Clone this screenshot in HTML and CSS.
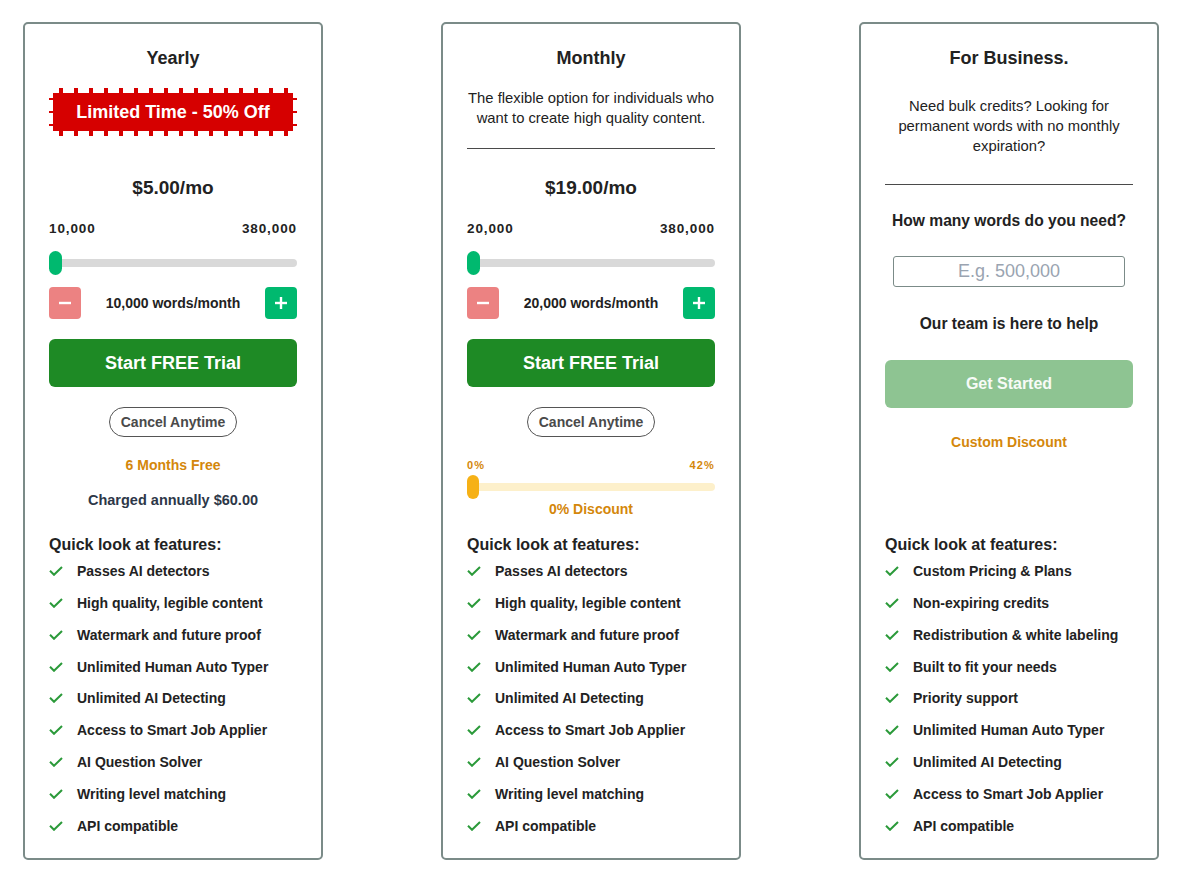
FILE: index.html
```html
<!DOCTYPE html>
<html lang="en">
<head>
<meta charset="utf-8">
<title>Pricing</title>
<link rel="stylesheet" href="styles.css">
</head>
<body>
<div class="page">

  <section class="card">
    <h2 class="title">Yearly</h2>
    <div class="badge"><div class="badge-body">Limited Time - 50% Off</div></div>
    <div class="price">$5.00/mo</div>
    <div class="range-labels"><span>10,000</span><span>380,000</span></div>
    <div class="slider"><div class="track"></div><div class="thumb"></div></div>
    <div class="stepper">
      <button class="step minus"><svg width="14" height="14" viewBox="0 0 14 14"><line x1="1" y1="7" x2="13" y2="7" stroke="#fff" stroke-width="2.4"/></svg></button>
      <span class="words">10,000 words/month</span>
      <button class="step plus"><svg width="14" height="14" viewBox="0 0 14 14"><line x1="1" y1="7" x2="13" y2="7" stroke="#fff" stroke-width="2.4"/><line x1="7" y1="1" x2="7" y2="13" stroke="#fff" stroke-width="2.4"/></svg></button>
    </div>
    <button class="cta">Start FREE Trial</button>
    <div class="pill-wrap"><span class="pill">Cancel Anytime</span></div>
    <div class="orange months">6 Months Free</div>
    <div class="charged">Charged annually $60.00</div>
    <h3 class="feat-title">Quick look at features:</h3>
    <ul class="features">
      <li><svg class="chk" width="14" height="10" viewBox="0 0 14 10"><polyline points="1,4.8 5,8.8 13,1" fill="none" stroke="#2b9a3a" stroke-width="2"/></svg>Passes AI detectors</li>
      <li><svg class="chk" width="14" height="10" viewBox="0 0 14 10"><polyline points="1,4.8 5,8.8 13,1" fill="none" stroke="#2b9a3a" stroke-width="2"/></svg>High quality, legible content</li>
      <li><svg class="chk" width="14" height="10" viewBox="0 0 14 10"><polyline points="1,4.8 5,8.8 13,1" fill="none" stroke="#2b9a3a" stroke-width="2"/></svg>Watermark and future proof</li>
      <li><svg class="chk" width="14" height="10" viewBox="0 0 14 10"><polyline points="1,4.8 5,8.8 13,1" fill="none" stroke="#2b9a3a" stroke-width="2"/></svg>Unlimited Human Auto Typer</li>
      <li><svg class="chk" width="14" height="10" viewBox="0 0 14 10"><polyline points="1,4.8 5,8.8 13,1" fill="none" stroke="#2b9a3a" stroke-width="2"/></svg>Unlimited AI Detecting</li>
      <li><svg class="chk" width="14" height="10" viewBox="0 0 14 10"><polyline points="1,4.8 5,8.8 13,1" fill="none" stroke="#2b9a3a" stroke-width="2"/></svg>Access to Smart Job Applier</li>
      <li><svg class="chk" width="14" height="10" viewBox="0 0 14 10"><polyline points="1,4.8 5,8.8 13,1" fill="none" stroke="#2b9a3a" stroke-width="2"/></svg>AI Question Solver</li>
      <li><svg class="chk" width="14" height="10" viewBox="0 0 14 10"><polyline points="1,4.8 5,8.8 13,1" fill="none" stroke="#2b9a3a" stroke-width="2"/></svg>Writing level matching</li>
      <li><svg class="chk" width="14" height="10" viewBox="0 0 14 10"><polyline points="1,4.8 5,8.8 13,1" fill="none" stroke="#2b9a3a" stroke-width="2"/></svg>API compatible</li>
    </ul>
  </section>

  <section class="card">
    <h2 class="title">Monthly</h2>
    <p class="desc desc-monthly">The flexible option for individuals who<br>want to create high quality content.</p>
    <hr class="rule rule-monthly">
    <div class="price price-monthly">$19.00/mo</div>
    <div class="range-labels"><span>20,000</span><span>380,000</span></div>
    <div class="slider"><div class="track"></div><div class="thumb"></div></div>
    <div class="stepper">
      <button class="step minus"><svg width="14" height="14" viewBox="0 0 14 14"><line x1="1" y1="7" x2="13" y2="7" stroke="#fff" stroke-width="2.4"/></svg></button>
      <span class="words">20,000 words/month</span>
      <button class="step plus"><svg width="14" height="14" viewBox="0 0 14 14"><line x1="1" y1="7" x2="13" y2="7" stroke="#fff" stroke-width="2.4"/><line x1="7" y1="1" x2="7" y2="13" stroke="#fff" stroke-width="2.4"/></svg></button>
    </div>
    <button class="cta">Start FREE Trial</button>
    <div class="pill-wrap"><span class="pill">Cancel Anytime</span></div>
    <div class="pct-labels"><span>0%</span><span>42%</span></div>
    <div class="slider slider-discount"><div class="track"></div><div class="thumb"></div></div>
    <div class="orange discount">0% Discount</div>
    <h3 class="feat-title feat-title-monthly">Quick look at features:</h3>
    <ul class="features">
      <li><svg class="chk" width="14" height="10" viewBox="0 0 14 10"><polyline points="1,4.8 5,8.8 13,1" fill="none" stroke="#2b9a3a" stroke-width="2"/></svg>Passes AI detectors</li>
      <li><svg class="chk" width="14" height="10" viewBox="0 0 14 10"><polyline points="1,4.8 5,8.8 13,1" fill="none" stroke="#2b9a3a" stroke-width="2"/></svg>High quality, legible content</li>
      <li><svg class="chk" width="14" height="10" viewBox="0 0 14 10"><polyline points="1,4.8 5,8.8 13,1" fill="none" stroke="#2b9a3a" stroke-width="2"/></svg>Watermark and future proof</li>
      <li><svg class="chk" width="14" height="10" viewBox="0 0 14 10"><polyline points="1,4.8 5,8.8 13,1" fill="none" stroke="#2b9a3a" stroke-width="2"/></svg>Unlimited Human Auto Typer</li>
      <li><svg class="chk" width="14" height="10" viewBox="0 0 14 10"><polyline points="1,4.8 5,8.8 13,1" fill="none" stroke="#2b9a3a" stroke-width="2"/></svg>Unlimited AI Detecting</li>
      <li><svg class="chk" width="14" height="10" viewBox="0 0 14 10"><polyline points="1,4.8 5,8.8 13,1" fill="none" stroke="#2b9a3a" stroke-width="2"/></svg>Access to Smart Job Applier</li>
      <li><svg class="chk" width="14" height="10" viewBox="0 0 14 10"><polyline points="1,4.8 5,8.8 13,1" fill="none" stroke="#2b9a3a" stroke-width="2"/></svg>AI Question Solver</li>
      <li><svg class="chk" width="14" height="10" viewBox="0 0 14 10"><polyline points="1,4.8 5,8.8 13,1" fill="none" stroke="#2b9a3a" stroke-width="2"/></svg>Writing level matching</li>
      <li><svg class="chk" width="14" height="10" viewBox="0 0 14 10"><polyline points="1,4.8 5,8.8 13,1" fill="none" stroke="#2b9a3a" stroke-width="2"/></svg>API compatible</li>
    </ul>
  </section>

  <section class="card">
    <h2 class="title">For Business.</h2>
    <p class="desc desc-business">Need bulk credits? Looking for<br>permanent words with no monthly<br>expiration?</p>
    <hr class="rule rule-business">
    <div class="question">How many words do you need?</div>
    <input class="words-input" type="text" placeholder="E.g. 500,000">
    <div class="help">Our team is here to help</div>
    <button class="cta cta-light">Get Started</button>
    <div class="orange custom">Custom Discount</div>
    <h3 class="feat-title feat-title-business">Quick look at features:</h3>
    <ul class="features">
      <li><svg class="chk" width="14" height="10" viewBox="0 0 14 10"><polyline points="1,4.8 5,8.8 13,1" fill="none" stroke="#2b9a3a" stroke-width="2"/></svg>Custom Pricing &amp; Plans</li>
      <li><svg class="chk" width="14" height="10" viewBox="0 0 14 10"><polyline points="1,4.8 5,8.8 13,1" fill="none" stroke="#2b9a3a" stroke-width="2"/></svg>Non-expiring credits</li>
      <li><svg class="chk" width="14" height="10" viewBox="0 0 14 10"><polyline points="1,4.8 5,8.8 13,1" fill="none" stroke="#2b9a3a" stroke-width="2"/></svg>Redistribution &amp; white labeling</li>
      <li><svg class="chk" width="14" height="10" viewBox="0 0 14 10"><polyline points="1,4.8 5,8.8 13,1" fill="none" stroke="#2b9a3a" stroke-width="2"/></svg>Built to fit your needs</li>
      <li><svg class="chk" width="14" height="10" viewBox="0 0 14 10"><polyline points="1,4.8 5,8.8 13,1" fill="none" stroke="#2b9a3a" stroke-width="2"/></svg>Priority support</li>
      <li><svg class="chk" width="14" height="10" viewBox="0 0 14 10"><polyline points="1,4.8 5,8.8 13,1" fill="none" stroke="#2b9a3a" stroke-width="2"/></svg>Unlimited Human Auto Typer</li>
      <li><svg class="chk" width="14" height="10" viewBox="0 0 14 10"><polyline points="1,4.8 5,8.8 13,1" fill="none" stroke="#2b9a3a" stroke-width="2"/></svg>Unlimited AI Detecting</li>
      <li><svg class="chk" width="14" height="10" viewBox="0 0 14 10"><polyline points="1,4.8 5,8.8 13,1" fill="none" stroke="#2b9a3a" stroke-width="2"/></svg>Access to Smart Job Applier</li>
      <li><svg class="chk" width="14" height="10" viewBox="0 0 14 10"><polyline points="1,4.8 5,8.8 13,1" fill="none" stroke="#2b9a3a" stroke-width="2"/></svg>API compatible</li>
    </ul>
  </section>

</div>
</body>
</html>
```
FILE: styles.css
```css
* { box-sizing: border-box; }

body {
  margin: 0;
  background: #ffffff;
  font-family: "Liberation Sans", Arial, sans-serif;
  color: #222222;
}

.page {
  display: flex;
  align-items: stretch;
  gap: 118px;
  padding: 22px 0 0 23px;
}

.card {
  width: 300px;
  border: 2px solid #7b8b88;
  border-radius: 5px;
  padding: 20px 24px 16px;
  display: flex;
  flex-direction: column;
  text-align: center;
}

.title {
  margin: 0;
  font-size: 18px;
  line-height: 28px;
  font-weight: 700;
  color: #222;
}

/* Badge with perforated edge */
.badge {
  margin-top: 16px;
  height: 48px;
  padding: 5px 4px;
  background:
    repeating-linear-gradient(90deg, #d60000 0 4px, transparent 4px 15px) 10px 0 / 230px 5px no-repeat,
    repeating-linear-gradient(90deg, #d60000 0 4px, transparent 4px 15px) 10px 100% / 230px 5px no-repeat,
    repeating-linear-gradient(180deg, #d60000 0 2.5px, transparent 2.5px 13px) 0 10px / 4px 30px no-repeat,
    repeating-linear-gradient(180deg, #d60000 0 2.5px, transparent 2.5px 13px) 100% 10px / 4px 30px no-repeat;
}
.badge-body {
  height: 38px;
  background: #d60000;
  color: #ffffff;
  font-size: 18px;
  font-weight: 700;
  line-height: 38px;
}

.price {
  margin-top: 38px;
  font-size: 19px;
  line-height: 28px;
  font-weight: 700;
  color: #222;
}
.price-monthly { margin-top: 25px; }

.range-labels {
  margin-top: 18px;
  display: flex;
  justify-content: space-between;
  font-size: 13.5px;
  line-height: 18px;
  font-weight: 700;
  letter-spacing: 0.9px;
  color: #222;
}

.slider {
  position: relative;
  margin-top: 13px;
  height: 24px;
}
.track {
  margin-top: 8px;
  height: 8px;
  border-radius: 4px;
  background: #d9d9d9;
}
.thumb {
  position: absolute;
  left: 0;
  top: 0;
  width: 13px;
  height: 24px;
  border-radius: 7px;
  background: #00b96f;
}

.stepper {
  margin-top: 12px;
  height: 32px;
  display: flex;
  align-items: center;
  justify-content: space-between;
}
.step {
  width: 32px;
  height: 32px;
  border: 0;
  border-radius: 4px;
  padding: 0;
  display: flex;
  align-items: center;
  justify-content: center;
}
.minus { background: #ec8282; }
.plus { background: #00b96f; }
.words {
  font-size: 14px;
  font-weight: 700;
  color: #222;
}

.cta {
  margin-top: 20px;
  height: 48px;
  width: 100%;
  border: 0;
  border-radius: 6px;
  background: #1e8a25;
  color: #ffffff;
  font-family: "Liberation Sans", Arial, sans-serif;
  font-size: 18px;
  font-weight: 700;
}
.cta-light {
  margin-top: 24px;
  background: #8ec492;
  font-size: 16px;
  color: #f7fbf7;
}

.pill-wrap {
  margin-top: 20px;
  display: flex;
  justify-content: center;
}
.pill {
  height: 30px;
  padding: 0 10.5px;
  border: 1px solid #555555;
  border-radius: 15px;
  font-size: 14px;
  line-height: 28px;
  font-weight: 700;
  color: #4a4a4a;
}

.orange {
  color: #d4870b;
  font-size: 14px;
  line-height: 20px;
  font-weight: 700;
}
.months { margin-top: 18px; }
.discount { margin-top: 0; }
.custom { margin-top: 24px; }

.charged {
  margin-top: 15px;
  font-size: 14.5px;
  line-height: 20px;
  font-weight: 700;
  color: #2d3748;
}

.feat-title {
  margin: 24px 0 0;
  text-align: left;
  font-size: 16px;
  line-height: 22px;
  font-weight: 700;
  color: #222;
}
.feat-title-monthly { margin-top: 15px; }
.feat-title-business { margin-top: 82px; }

.features {
  list-style: none;
  margin: -1px 0 0;
  padding: 0;
  text-align: left;
}
.features li {
  height: 31.875px;
  display: flex;
  align-items: center;
  font-size: 14px;
  font-weight: 700;
  color: #222;
}
.chk {
  flex: none;
  margin-right: 14px;
}

.desc {
  margin: 0;
  font-size: 14.8px;
  line-height: 20px;
  font-weight: 400;
  white-space: nowrap;
  color: #222;
}
.desc-monthly { margin-top: 16px; }
.desc-business { margin-top: 24px; }

.rule {
  width: 100%;
  margin: 0;
  border: 0;
  border-top: 1px solid #4a4a4a;
  height: 0;
}
.rule-monthly { margin-top: 20px; }
.rule-business { margin-top: 28px; }

.pct-labels {
  margin-top: 21px;
  display: flex;
  justify-content: space-between;
  font-size: 11px;
  line-height: 14px;
  font-weight: 700;
  letter-spacing: 1.2px;
  color: #d4870b;
}
.slider-discount { margin-top: 3px; }
.slider-discount .track { background: #fdf0cb; }
.slider-discount .thumb { width: 12px; background: #f6b116; }

.question {
  margin-top: 24px;
  font-size: 15.6px;
  line-height: 24px;
  font-weight: 700;
  color: #222;
}
.words-input {
  margin-top: 23px;
  align-self: center;
  width: 232px;
  height: 31px;
  border: 1px solid #7b8b88;
  border-radius: 3px;
  font-family: "Liberation Sans", Arial, sans-serif;
  font-size: 18px;
  text-align: center;
  padding: 0;
  color: #222;
}
.words-input::placeholder { color: #9aa4b1; }
.help {
  margin-top: 25px;
  font-size: 15.6px;
  line-height: 24px;
  font-weight: 700;
  color: #222;
}
```
